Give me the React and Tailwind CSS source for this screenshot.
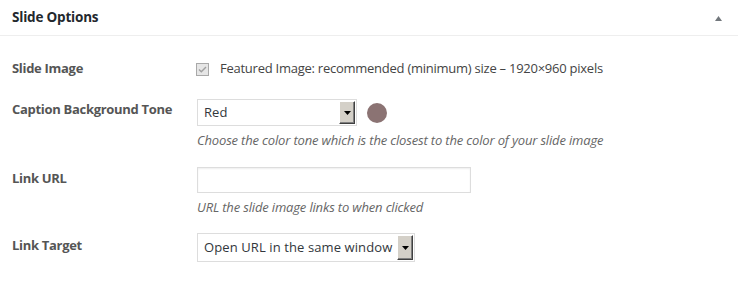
import React from "react";

const font = { fontFamily: '"Open Sans", "Noto Sans", sans-serif' };

function Arrow() {
  return (
    <div className="flex h-full w-[16px] items-center justify-center border border-t-[#fff] border-l-[#fff] border-r-[#404040] border-b-[#404040] bg-[#d4d0c8] shadow-[inset_-1px_-1px_0_#808080]">
      <svg width="7" height="4" viewBox="0 0 7 4">
        <path d="M0 0H7L3.5 4Z" fill="#000" />
      </svg>
    </div>
  );
}

function Select({ value, width, height }) {
  return (
    <div
      className={`flex items-stretch border border-[#ddd] bg-white p-px ${width} ${height}`}
    >
      <div className="flex flex-1 items-center pl-[5px] text-[13px] tracking-[0.1px] text-[#32373c]">
        {value}
      </div>
      <Arrow />
    </div>
  );
}

export default function App() {
  return (
    <div className="h-[285px] w-[738px] bg-white" style={font}>
      <div className="flex h-[36px] items-center justify-between border-b border-[#eee] pl-[12px] pr-[16px]">
        <span className="text-[13.5px] font-bold text-[#23282d] tracking-[-0.2px]">Slide Options</span>
        <svg width="7" height="5" viewBox="0 0 7 5" className="mt-[1px]">
          <path d="M3.5 0L7 5H0Z" fill="#72777c" />
        </svg>
      </div>
      <div className="pl-[12px]">
        <div className="mt-[26px] flex h-[14px] items-center">
          <div className="w-[185px] text-[13px] font-bold text-[#555] tracking-[-0.3px]">Slide Image</div>
          <div className="flex items-center">
            <svg width="13" height="13" viewBox="0 0 13 13" className="ml-[-1px]">
              <rect x="0.5" y="0.5" width="12" height="12" fill="#e6e6e6" stroke="#a9a9a9" />
              <path d="M3 6.5L5.3 8.8L10 4" fill="none" stroke="#a0a0a0" strokeWidth="1.4" />
            </svg>
            <span className="ml-[11px] text-[13px] text-[#444] tracking-[-0.25px]">
              Featured Image: recommended (minimum) size – 1920×960 pixels
            </span>
          </div>
        </div>

        <div className="mt-[23px] flex">
          <div className="w-[185px] text-[13px] font-bold leading-[20px] text-[#555] tracking-[-0.3px]">
            Caption Background Tone
          </div>
          <div>
            <div className="flex items-center">
              <Select value="Red" width="w-[160px]" height="h-[27px]" />
              <div className="ml-[10px] h-[20px] w-[20px] rounded-full bg-[#8b7373]" />
            </div>
            <div className="mt-[5px] text-[13px] italic leading-[18px] text-[#666] tracking-[-0.16px]">
              Choose the color tone which is the closest to the color of your slide image
            </div>
          </div>
        </div>

        <div className="mt-[18px] flex">
          <div className="w-[185px] pt-px text-[13px] font-bold leading-[20px] text-[#555] tracking-[-0.3px]">
            Link URL
          </div>
          <div>
            <div className="h-[26px] w-[274px] border border-[#ddd] bg-white shadow-[inset_0_1px_2px_rgba(0,0,0,0.07)]" />
            <div className="mt-[5px] text-[13px] italic leading-[18px] text-[#666] tracking-[-0.16px]">
              URL the slide image links to when clicked
            </div>
          </div>
        </div>

        <div className="mt-[17px] flex">
          <div className="w-[185px] pt-[2px] text-[13px] font-bold leading-[20px] text-[#555] tracking-[-0.3px]">
            Link Target
          </div>
          <Select value="Open URL in the same window" width="w-[218px]" height="h-[29px]" />
        </div>
      </div>
    </div>
  );
}
